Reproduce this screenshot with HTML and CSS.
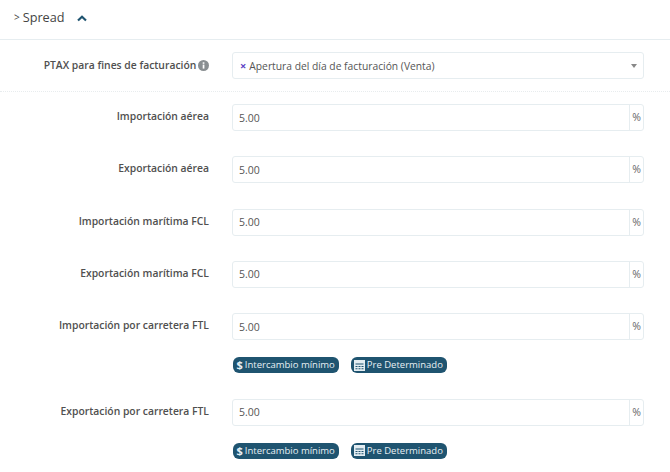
FILE: index.html
```html
<!DOCTYPE html>
<html lang="en">

<head>
    <meta charset="UTF-8" />
    <title>Spread</title>
    <link rel="stylesheet" href="styles.css">
</head>

<body>
    <div class="section-title">
        <span class="title-caret">&gt;</span>
        <span class="title-text">Spread</span>
        <svg class="chevron" width="10" height="7" viewBox="0 0 10 7">
            <path d="M1 5.5 L5 1.8 L9 5.5" fill="none" stroke="#1f5470" stroke-width="2.2" />
        </svg>
    </div>

    <div class="ptax-row">
        <label class="field-label">PTAX para fines de facturación
            <svg class="info" width="11" height="11" viewBox="0 0 11 11">
                <circle cx="5.5" cy="5.5" r="5.5" fill="#8a8f92" />
                <rect x="4.7" y="4.6" width="1.7" height="4" fill="#fff" />
                <rect x="4.7" y="2.3" width="1.7" height="1.5" fill="#fff" />
            </svg>
        </label>
        <div class="select-box">
            <span class="select-x">×</span>
            <span>Apertura del día de facturación (Venta)</span>
            <span class="select-arrow"></span>
        </div>
    </div>

    <div class="fields">
        <div class="field-row">
            <label class="field-label">Importación aérea</label>
            <div class="input-group"><span class="input-value">5.00</span><span class="addon">%</span></div>
        </div>
        <div class="field-row">
            <label class="field-label">Exportación aérea</label>
            <div class="input-group"><span class="input-value">5.00</span><span class="addon">%</span></div>
        </div>
        <div class="field-row">
            <label class="field-label">Importación marítima FCL</label>
            <div class="input-group"><span class="input-value">5.00</span><span class="addon">%</span></div>
        </div>
        <div class="field-row">
            <label class="field-label">Exportación marítima FCL</label>
            <div class="input-group"><span class="input-value">5.00</span><span class="addon">%</span></div>
        </div>
        <div class="field-row has-badges">
            <label class="field-label">Importación por carretera FTL</label>
            <div class="input-group"><span class="input-value">5.00</span><span class="addon">%</span></div>
        </div>
        <div class="badges">
            <span class="badge"><b class="dollar">$</b> Intercambio mínimo</span>
            <span class="badge">
                <svg width="11" height="11" viewBox="0 0 11 11">
                    <path fill="#e3edf2" d="M0 0h11v11H0z" />
                    <path fill="#1f5470" d="M1.5 3.5h8v1h-8zM1.5 6h2v1h-2zM4.5 6h2v1h-2zM7.5 6h2v1h-2zM1.5 8.3h2v1h-2zM4.5 8.3h2v1h-2zM7.5 8.3h2v1h-2z" />
                </svg>
                Pre Determinado</span>
        </div>
        <div class="field-row has-badges">
            <label class="field-label">Exportación por carretera FTL</label>
            <div class="input-group"><span class="input-value">5.00</span><span class="addon">%</span></div>
        </div>
        <div class="badges">
            <span class="badge"><b class="dollar">$</b> Intercambio mínimo</span>
            <span class="badge">
                <svg width="11" height="11" viewBox="0 0 11 11">
                    <path fill="#e3edf2" d="M0 0h11v11H0z" />
                    <path fill="#1f5470" d="M1.5 3.5h8v1h-8zM1.5 6h2v1h-2zM4.5 6h2v1h-2zM7.5 6h2v1h-2zM1.5 8.3h2v1h-2zM4.5 8.3h2v1h-2zM7.5 8.3h2v1h-2z" />
                </svg>
                Pre Determinado</span>
        </div>
    </div>
</body>

</html>
```

FILE: styles.css
```css
* {
    box-sizing: border-box;
}

html,
body {
    height: 472px;
    overflow: hidden;
}

body {
    margin: 0;
    font-family: "Open Sans", "Noto Sans", sans-serif;
    font-size: 10.3px;
    color: #555;
    background-color: #fff;
}

.section-title {
    height: 40px;
    padding: 7px 0 0 14px;
    border-bottom: 1px solid #e6edf0;
    display: flex;
    align-items: flex-start;
}

.title-caret {
    font-size: 10px;
    line-height: 20px;
    color: #444;
    margin-right: 3px;
}

.title-text {
    font-size: 12.7px;
    line-height: 20px;
    color: #444;
}

.chevron {
    margin: 8px 0 0 12px;
}

.ptax-row {
    height: 52px;
    padding-top: 12px;
    border-bottom: 1px dotted #e8ecee;
    display: flex;
}

.ptax-row .field-label {
    padding-top: 5px;
}

.field-row {
    display: flex;
    margin-bottom: 25.25px;
}

.field-row.has-badges {
    margin-bottom: 17px;
}

.fields {
    padding-top: 12px;
}

.field-label {
    width: 209px;
    padding-top: 4px;
    text-align: right;
    font-weight: 600;
    font-size: 10.35px;
    line-height: 16px;
    color: #505050;
    flex-shrink: 0;
}

.info {
    vertical-align: -2px;
    margin-left: -1px;
}

.select-box {
    width: 412px;
    height: 27px;
    margin-left: 23px;
    padding: 0 7px;
    border: 1px solid #e6edf0;
    border-radius: 3px;
    display: flex;
    align-items: center;
    font-size: 10.3px;
    color: #555;
    position: relative;
}

.select-x {
    color: #5b3fc4;
    font-weight: 700;
    margin-right: 3px;
    font-size: 11px;
}

.select-arrow {
    position: absolute;
    right: 6px;
    top: 11px;
    border-left: 3.5px solid transparent;
    border-right: 3.5px solid transparent;
    border-top: 4px solid #888;
}

.input-group {
    width: 412px;
    height: 27px;
    margin-left: 23px;
    border: 1px solid #e6edf0;
    border-radius: 3px;
    display: flex;
    align-items: center;
}

.input-value {
    flex-grow: 1;
    padding-left: 6px;
    font-size: 10.5px;
    color: #555;
}

.addon {
    width: 14px;
    height: 100%;
    border-left: 1px solid #e6edf0;
    font-size: 10.5px;
    line-height: 25px;
    text-align: center;
    color: #666;
}

.badges {
    display: flex;
    gap: 12px;
    margin: 0 0 25.5px 232.5px;
}

.badge {
    height: 16px;
    padding: 0 4px 0 3px;
    border-radius: 6px;
    background-color: #1f5470;
    color: #e8f0f4;
    font-size: 9.5px;
    font-weight: 500;
    line-height: 16px;
    display: flex;
    align-items: center;
    gap: 2px;
}

.dollar {
    font-size: 11px;
    font-weight: 700;
    margin-left: 1px;
}
```
